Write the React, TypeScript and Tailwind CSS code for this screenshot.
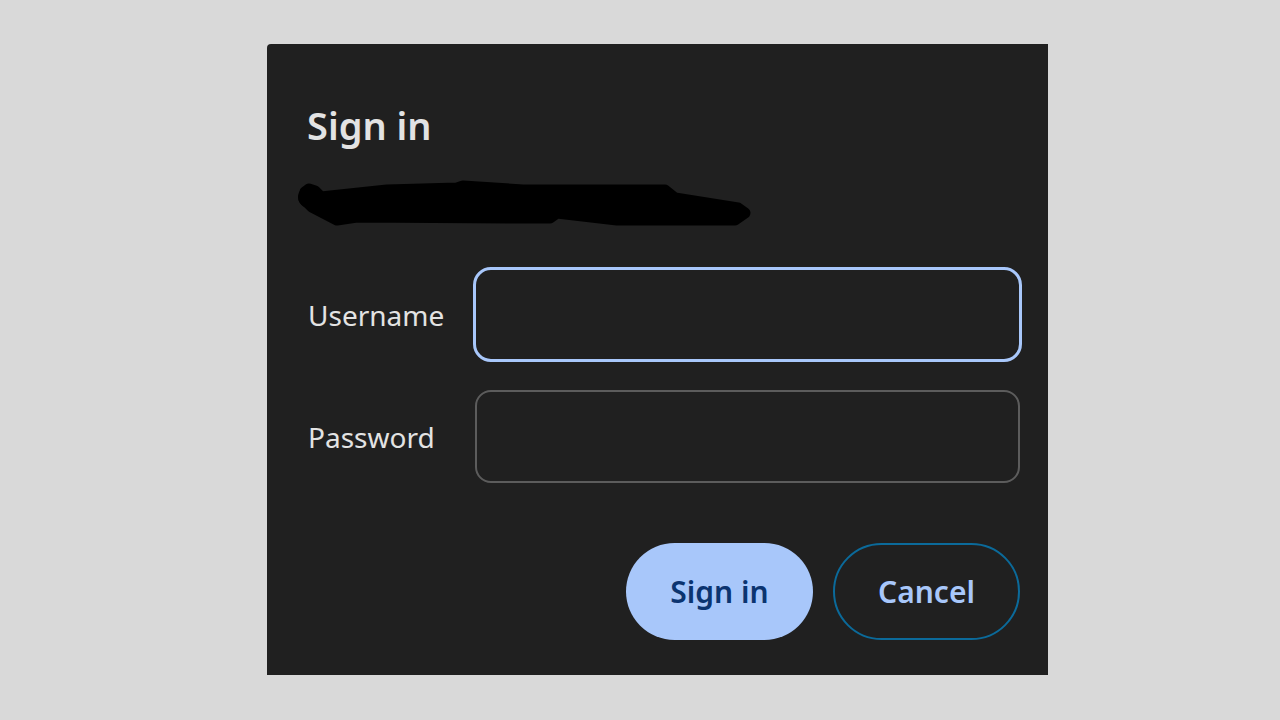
import React from "react";

export default function App() {
  const font = { fontFamily: '"Noto Sans", "Open Sans", sans-serif' };
  return (
    <div className="w-[1280px] h-[720px] bg-[#d9d9d9] overflow-hidden" style={font}>
      <div className="ml-[267px] mt-[44px] w-[781px] h-[631px] bg-[#202020] rounded-tl-[4px] flex flex-col pl-[40px] pr-[28px]">
        <h1 className="pt-[62px] text-[38px] leading-none font-semibold text-[#e3e3e3]">Sign in</h1>
        <svg width="460" height="50" viewBox="0 0 460 50" className="mt-[34px] ml-[-10px] shrink-0">
          <circle cx="12" cy="19" r="11" fill="#000" />
          <path
            d="M8 14 L12 11 L18 13 L24 19 L90 12 L160 10 L166 8 L226 12 L368 12 L378 20 L441 30 L448 35 L438 42 L320 42 L260 35 L253 40 L220 40 L60 39 L40 42 L15 29 L7 21 Z"
            fill="#000"
            stroke="#000"
            strokeWidth="11"
            strokeLinejoin="round"
          />
        </svg>
        <div className="mt-[39px] flex items-center">
          <label className="w-[168px] shrink-0 text-[28px] leading-none text-[#e3e3e3] pl-[1px]">Username</label>
          <div className="ml-[-2px] shrink-0 w-[549px] h-[95px] rounded-[18px] border-[3px] border-[#a8c7fa] bg-[#202020]" />
        </div>
        <div className="mt-[28px] flex items-center">
          <label className="w-[168px] shrink-0 text-[28px] leading-none text-[#e3e3e3] pl-[1px]">Password</label>
          <div className="shrink-0 w-[545px] h-[93px] rounded-[16px] border-2 border-[#5c5c5c] bg-[#202020]" />
        </div>
        <div className="mt-[60px] flex justify-end gap-[20px]">
          <button className="shrink-0 w-[187px] h-[97px] rounded-full bg-[#a8c7fa] text-[#0b3470] text-[30px] font-semibold">
            Sign in
          </button>
          <button className="shrink-0 w-[187px] h-[97px] rounded-full border-2 border-[#0b6a9a] text-[#a8c7fa] text-[30px] font-semibold">
            Cancel
          </button>
        </div>
      </div>
    </div>
  );
}
